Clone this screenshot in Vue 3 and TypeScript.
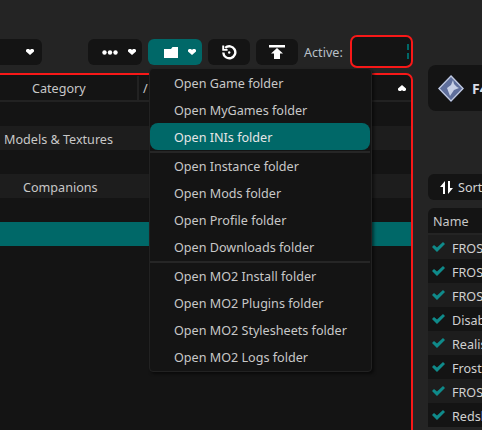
<script setup lang="ts">
const topItems: string[] = ['Open Game folder', 'Open MyGames folder', 'Open INIs folder']
const midItems: string[] = ['Open Instance folder', 'Open Mods folder', 'Open Profile folder', 'Open Downloads folder']
const lowItems: string[] = ['Open MO2 Install folder', 'Open MO2 Plugins folder', 'Open MO2 Stylesheets folder', 'Open MO2 Logs folder']
const rows = [
  { text: '', kind: 'odd', indent: 0 },
  { text: 'Models & Textures', kind: 'even', indent: 4 },
  { text: '', kind: 'odd', indent: 0 },
  { text: 'Companions', kind: 'even', indent: 23 },
  { text: '', kind: 'odd', indent: 0 },
  { text: '', kind: 'sel', indent: 0 },
  { text: '', kind: 'odd', indent: 0 },
  { text: '', kind: 'odd', indent: 0 },
  { text: '', kind: 'odd', indent: 0 },
  { text: '', kind: 'odd', indent: 0 },
  { text: '', kind: 'odd', indent: 0 },
  { text: '', kind: 'odd', indent: 0 },
  { text: '', kind: 'odd', indent: 0 },
]
const plugins: string[] = ['FROS', 'FROS', 'FROS', 'Disab', 'Realis', 'Frost', 'FROS', 'Redsl']
</script>

<template>
  <div class="app">
    <div class="toolbar">
      <button class="btn first">
        <svg class="chev" viewBox="0 0 8 6"><path d="M0 1 1 0h2l1 1 1-1h2l1 1v1.500L4 6 0 2.500z" /></svg>
      </button>
      <button class="btn dots">
        <svg width="16" height="5" viewBox="0 0 16 5"><circle cx="2.500" cy="2.500" r="2.200" /><circle cx="8" cy="2.500" r="2.200" /><circle cx="13.500" cy="2.500" r="2.200" /></svg>
        <svg class="chev" viewBox="0 0 8 6"><path d="M0 1 1 0h2l1 1 1-1h2l1 1v1.500L4 6 0 2.500z" /></svg>
      </button>
      <button class="btn folder">
        <svg width="14" height="11" viewBox="0 0 14 11"><path d="M0 2h7L8.500 0H14v11H0z" /></svg>
        <svg class="chev" viewBox="0 0 8 6"><path d="M0 1 1 0h2l1 1 1-1h2l1 1v1.500L4 6 0 2.500z" /></svg>
      </button>
      <button class="btn square">
        <svg width="16" height="15" viewBox="0 0 16 15" fill="none" stroke="#fff" stroke-width="2.400"><path d="M4.200 2.900A6 6 0 1 1 2.300 7.500" /><path d="M2.200 0.500v4.400h4.400" stroke-width="1.900" /><circle cx="8.200" cy="7.500" r="1.200" fill="#fff" stroke="none" /></svg>
      </button>
      <button class="btn square">
        <svg width="16" height="14" viewBox="0 0 16 14"><path d="M0 0h16v2.500H0zM8 3l6 5.500h-3V14H5V8.500H2z" /></svg>
      </button>
      <span class="active-label">Active:</span>
      <div class="active-box"><i class="tick" /><i class="tick" /></div>
    </div>

    <div class="main">
      <section class="mods">
        <header class="mods-head">
          <span class="col-cat">Category</span>
          <span class="col-sep" />
          <span class="col-slash">/</span>
          <svg class="chev up" viewBox="0 0 8 6"><path d="M0 5 1 6h2l1-1 1 1h2l1-1V3.500L4 0 0 3.500z" /></svg>
        </header>
        <div class="mod-list">
          <div v-for="(r, i) in rows" :key="i" class="mod-row" :class="r.kind">
            <span :style="{ marginLeft: r.indent + 'px' }">{{ r.text }}</span>
          </div>
        </div>
      </section>

      <aside class="side">
        <div class="game-card">
          <svg class="diamond" width="26" height="27" viewBox="0 0 26 27">
            <path d="M13 0 26 13.500 13 27 0 13.500z" fill="#5f6f9c" />
            <path d="M13 1 25 13.500 13 26 1 13.500z" fill="none" stroke="#c4cce0" stroke-width="1.200" />
            <path d="M15 5l1 4 3 3 2 1-5 2-2 3-2 3-3-8 4-3z" fill="#c7d0e6" />
          </svg>
          <span class="game-name">F4</span>
        </div>
        <button class="sort-btn">
          <svg width="13" height="13" viewBox="0 0 13 13"><path d="M5 0v13H3V6H0zM8 13V0h2v7h3z" /></svg>
          <span>Sort</span>
        </button>
        <div class="plugins">
          <div class="plugin-head">Name</div>
          <div class="plugin-list">
            <div v-for="(p, i) in plugins" :key="i" class="plugin-row">
              <svg width="13" height="10" viewBox="0 0 13 10"><path d="M0 5 2 3l3 2.500L11 0l2 2-8 8z" /></svg>
              <span>{{ p }}</span>
            </div>
          </div>
        </div>
      </aside>
    </div>

    <nav class="menu">
      <div class="group first-group">
        <div v-for="m in topItems" :key="m" class="item" :class="{ hot: m === 'Open INIs folder' }">{{ m }}</div>
      </div>
      <div class="group">
        <div v-for="m in midItems" :key="m" class="item">{{ m }}</div>
      </div>
      <div class="group">
        <div v-for="m in lowItems" :key="m" class="item">{{ m }}</div>
      </div>
    </nav>
  </div>
</template>

<style scoped>
.app {
  position: relative;
  width: 482px;
  height: 430px;
  overflow: hidden;
  background: #242424;
  color: #c8c8c8;
  font-family: "Noto Sans", "Open Sans", sans-serif;
  font-size: 12.6px;
}
.toolbar {
  display: flex;
  align-items: center;
  height: 68px;
  padding-top: 36px;
  box-sizing: border-box;
}
.btn {
  display: flex;
  align-items: center;
  justify-content: center;
  height: 26px;
  margin: 0 6px 0 0;
  padding: 0;
  border: 0;
  border-radius: 6px;
  background: #141414;
  fill: #fff;
  flex: none;
}
.chev { width: 8px; height: 6px; fill: #fff; flex: none; }
.first { width: 62px; margin-left: -20px; margin-right: 46px; justify-content: flex-end; padding-right: 8px; }
.dots { width: 54px; gap: 10px; justify-content: flex-start; padding-left: 14px; }
.folder { width: 54px; gap: 10px; justify-content: flex-start; padding-left: 16px; background: #006868; }
.square { width: 42px; }
.active-label { color: #b9c0c8; margin-right: 8px; width: 38px; white-space: nowrap; }
.active-box {
  display: flex;
  flex-direction: column;
  align-items: flex-end;
  justify-content: center;
  gap: 3px;
  width: 63px;
  height: 33px;
  margin-top: -1px;
  box-sizing: border-box;
  padding-right: 2px;
  border: 2px solid #f81818;
  border-radius: 7px;
  background: #141414;
  flex: none;
}
.tick { display: block; width: 2px; height: 6px; background: #006868; }
.main { display: flex; height: 357px; margin-top: 5px; }
.mods {
  width: 423px;
  height: 372px;
  margin-left: -10px;
  flex: none;
  box-sizing: border-box;
  border: 2px solid #f81818;
  border-radius: 7px 7px 0 0;
  background: #141414;
  overflow: hidden;
}
.mods-head {
  display: flex;
  align-items: center;
  height: 25px;
  padding-top: 1px;
  box-sizing: border-box;
  margin-bottom: 2px;
  box-shadow: 0 2px 0 #222;
}
.col-cat { margin-left: 40px; width: 105px; flex: none; }
.col-sep { width: 2px; height: 25px; background: #222; flex: none; }
.col-slash { margin-left: 4px; }
.up { margin-left: auto; margin-right: 5px; }
.mod-row {
  display: flex;
  align-items: center;
  height: 24px;
  padding: 2px 0 0 8px;
  box-sizing: border-box;
}
.mod-row.even { background: #1d1d1d; }
.mod-row.sel { background: #006868; }
.side {
  flex: 1;
  min-width: 0;
  display: flex;
  flex-direction: column;
  padding-left: 15px;
}
.game-card {
  display: flex;
  align-items: center;
  gap: 8px;
  height: 46px;
  margin-top: -8px;
  padding-left: 10px;
  box-sizing: border-box;
  border-radius: 8px 0 0 8px;
  background: #141414;
  overflow: hidden;
}
.diamond { flex: none; }
.game-name { color: #d9dde6; font-weight: 700; font-size: 14px; }
.sort-btn {
  display: flex;
  align-items: center;
  gap: 5px;
  height: 26px;
  margin-top: 63px;
  padding: 0 0 0 12px;
  border: 0;
  border-radius: 6px 0 0 6px;
  background: #141414;
  color: #d4d4d4;
  font: inherit;
  fill: #fff;
  overflow: hidden;
}
.sort-btn svg { flex: none; }
.plugins { margin-top: 8px; }
.plugin-head {
  height: 25px;
  line-height: 27px;
  padding-left: 5px;
  border-radius: 6px 0 0 0;
  background: #141414;
  margin-bottom: 2px;
}
.plugin-row {
  display: flex;
  align-items: center;
  gap: 7px;
  height: 24px;
  padding: 2px 0 0 4px;
  box-sizing: border-box;
  fill: #0f8a8a;
  color: #d0d0d0;
  overflow: hidden;
  white-space: nowrap;
}
.plugin-row svg { flex: none; margin-top: -3px; }
.plugin-row:nth-child(even) { background: #141414; }
.plugin-row:nth-child(odd) { background: #1d1d1d; }
.menu {
  position: absolute;
  left: 149px;
  top: 68px;
  width: 223px;
  height: 304px;
  box-sizing: border-box;
  padding: 0 1px 0 0;
  border: 1px solid #222;
  border-radius: 4px;
  background: #141414;
  box-shadow: 2px 2px 3px rgba(0, 0, 0, 0.5);
}
.first-group { margin-bottom: 1px; }
.first-group .item { line-height: 29px; }
.group + .group { border-top: 2px solid #262626; }
.item {
  height: 27px;
  line-height: 27px;
  padding-left: 24px;
  white-space: nowrap;
}
.item.hot {
  background: #006868;
  color: #e6e6e6;
  border-radius: 8px;
}
</style>
